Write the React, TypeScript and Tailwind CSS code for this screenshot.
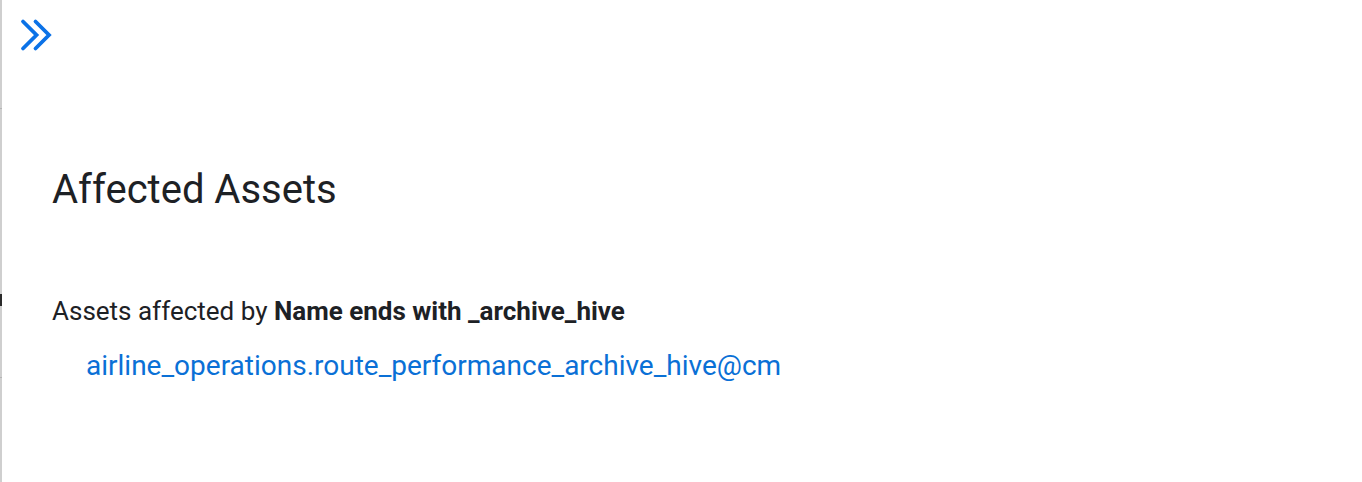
import React from "react";

export default function App() {
  return (
    <div className="flex h-[482px] w-[1362px] bg-white" style={{ fontFamily: "Roboto, 'Noto Sans', sans-serif" }}>
      <div className="relative h-full w-[2px] shrink-0 bg-[#cfcfcf]">
        <div className="absolute left-0 top-[108px] h-[1px] w-[2px] bg-[#b5b5b5]" />
        <div className="absolute left-0 top-[294px] h-[12px] w-[2px] bg-[#2a2a2a]" />
        <div className="absolute left-0 top-[377px] h-[1px] w-[2px] bg-[#b5b5b5]" />
      </div>
      <div className="flex flex-1 flex-col">
        <div className="pl-[18px] pt-[18px]">
          <svg width="36" height="34" viewBox="0 0 36 34" fill="none">
            <path d="M3 3.5 L16.5 17 L3 30.5" stroke="#0b72e7" strokeWidth="3.8" strokeLinecap="round" strokeLinejoin="miter" />
            <path d="M15.5 3.5 L29 17 L15.5 30.5" stroke="#0b72e7" strokeWidth="3.8" strokeLinecap="round" strokeLinejoin="miter" />
          </svg>
        </div>
        <div className="pl-[50px] pt-[114px]">
          <h1 className="text-[40px] leading-[48px] text-[#1d2125]">Affected Assets</h1>
          <p className="mt-[81px] text-[26px] leading-[32px] text-[#1d2125]">
            Assets affected by <span className="font-bold">Name ends with _archive_hive</span>
          </p>
          <a className="mt-[22px] block pl-[34px] text-[28px] leading-[34px] text-[#0a70d6]">
            airline_operations.route_performance_archive_hive@cm
          </a>
        </div>
      </div>
    </div>
  );
}
